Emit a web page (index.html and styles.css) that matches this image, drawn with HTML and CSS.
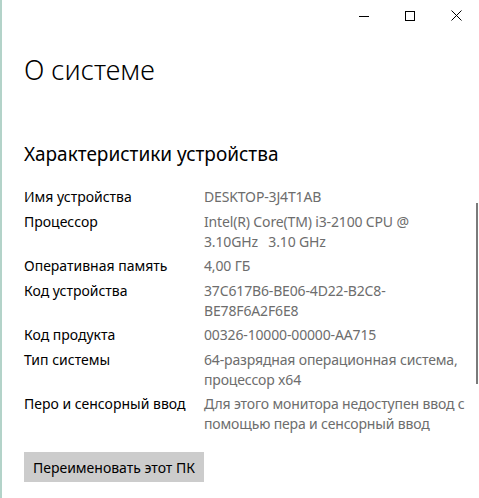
FILE: index.html
```html
<!DOCTYPE html>
<html lang="ru">
<head>
<meta charset="utf-8">
<title>О системе</title>
<link rel="stylesheet" href="styles.css">
</head>
<body>
<div class="window">
  <div class="titlebar">
    <div class="ctl"><svg width="10" height="10" viewBox="0 0 10 10"><path d="M0 5.5H10" stroke="#000" stroke-width="1"/></svg></div>
    <div class="ctl"><svg width="10" height="10" viewBox="0 0 10 10"><rect x="0.5" y="0.5" width="9" height="9" fill="none" stroke="#000" stroke-width="1"/></svg></div>
    <div class="ctl"><svg width="11" height="11" viewBox="0 0 11 11"><path d="M0.5 0.5L10.5 10.5M10.5 0.5L0.5 10.5" stroke="#000" stroke-width="1"/></svg></div>
  </div>
  <div class="content">
    <h1 class="title">О системе</h1>
    <h2 class="subtitle">Характеристики устройства</h2>
    <div class="specs">
      <div class="label">Имя устройства</div><div class="value">DESKTOP-3J4T1AB</div>
      <div class="label">Процессор</div><div class="value">Intel(R) Core(TM) i3-2100 CPU @<br>3.10GHz&nbsp;&nbsp; 3.10 GHz</div>
      <div class="label">Оперативная память</div><div class="value">4,00 ГБ</div>
      <div class="label">Код устройства</div><div class="value">37C617B6-BE06-4D22-B2C8-<br>BE78F6A2F6E8</div>
      <div class="label">Код продукта</div><div class="value">00326-10000-00000-AA715</div>
      <div class="label">Тип системы</div><div class="value">64-разрядная операционная система,<br>процессор x64</div>
      <div class="label">Перо и сенсорный ввод</div><div class="value">Для этого монитора недоступен ввод с<br>помощью пера и сенсорный ввод</div>
    </div>
    <button class="rename">Переименовать этот ПК</button>
  </div>
  <div class="scrollbar"></div>
</div>
</body>
</html>
```
FILE: styles.css
```css
html, body {
  margin: 0;
  padding: 0;
  background: #fff;
}
body {
  font-family: "Noto Sans", "Open Sans", sans-serif;
  color: #000;
}
.window {
  position: relative;
  width: 479px;
  height: 498px;
  box-sizing: border-box;
  border-left: 2px solid #b3d3c9;
  overflow: hidden;
}
.titlebar {
  display: flex;
  justify-content: flex-end;
  height: 31px;
}
.ctl {
  width: 46px;
  display: flex;
  align-items: center;
  justify-content: center;
}
.content {
  padding-left: 22px;
}
.title {
  margin: 21px 0 0;
  font-size: 27px;
  font-weight: 300;
  line-height: 36px;
}
.subtitle {
  margin: 52px 0 0;
  font-size: 19px;
  font-weight: 400;
  line-height: 28px;
}
.specs {
  display: grid;
  grid-template-columns: 180px 1fr;
  row-gap: 4.5px;
  margin-top: 19px;
  font-size: 14px;
  line-height: 20px;
}
.label {
  color: #000;
}
.value {
  color: #6d6d6d;
  white-space: nowrap;
  letter-spacing: -0.15px;
}
.rename {
  display: block;
  margin-top: 18px;
  width: 180px;
  height: 30px;
  border: none;
  background: #cccccc;
  font-family: "Noto Sans", "Open Sans", sans-serif;
  font-size: 14px;
  color: #000;
  padding: 0;
}
.scrollbar {
  position: absolute;
  right: 1px;
  top: 203px;
  width: 2px;
  height: 181px;
  background: #7a7a7a;
}
```
